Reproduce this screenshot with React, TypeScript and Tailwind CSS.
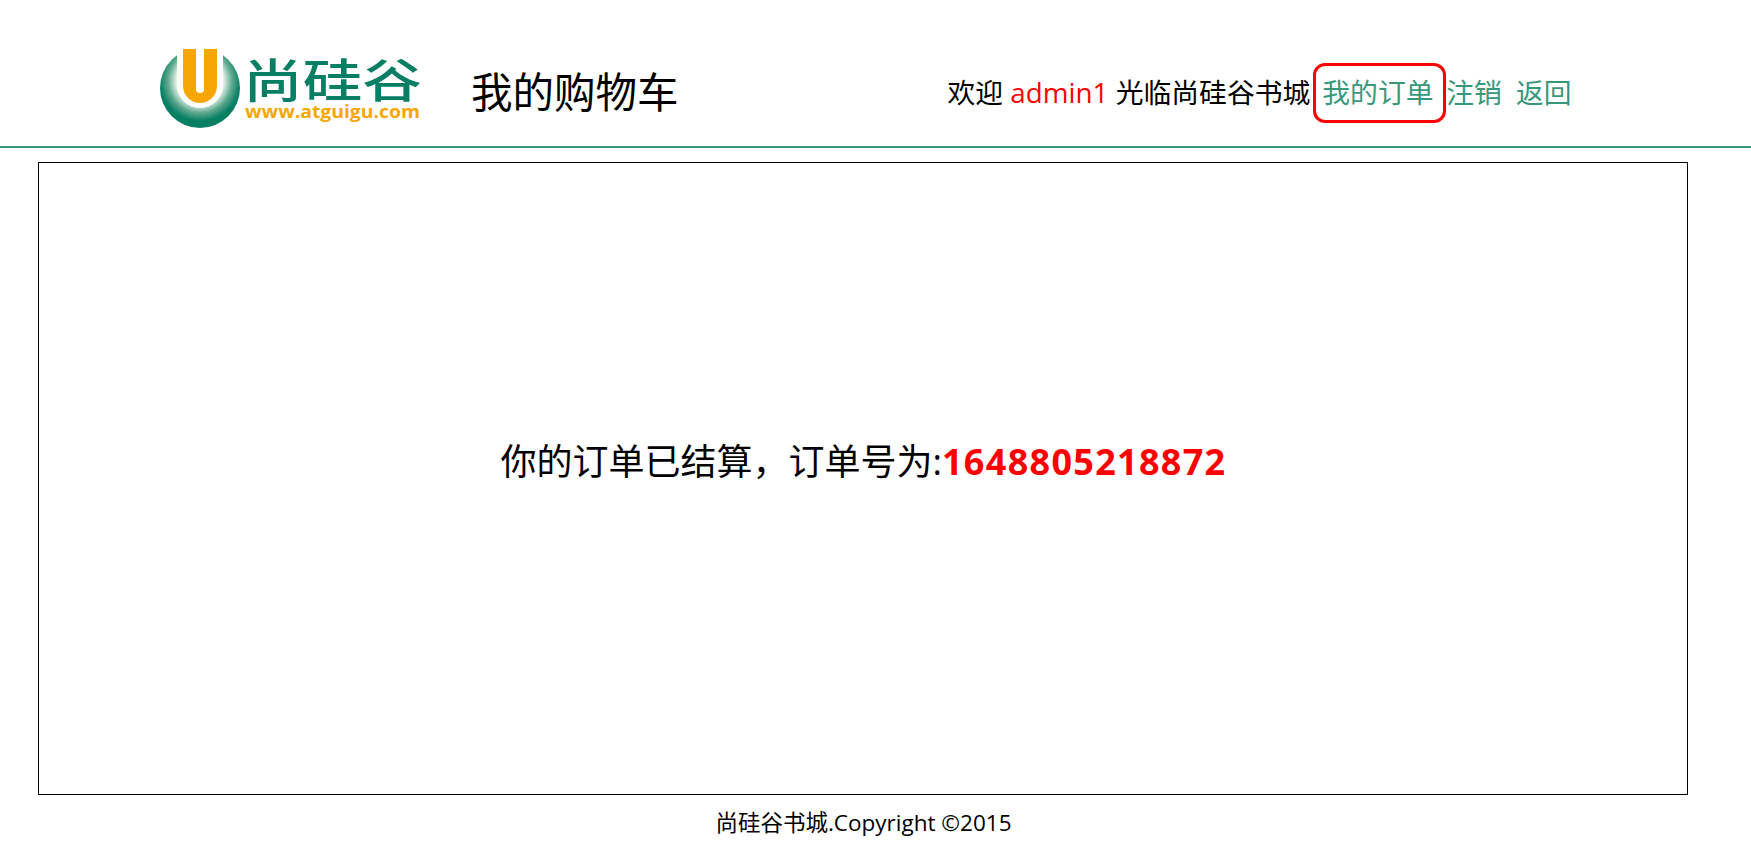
export default function App() {
  return (
    <div className="h-[852px] w-full overflow-hidden bg-white text-black font-['Open_Sans','Noto_Sans_CJK_SC',sans-serif]">
      <header className="flex h-[148px] items-center border-b-2 border-[#39987c] pl-[158px] pt-[44px]">
        <svg width="270" height="90" viewBox="0 0 270 90" className="mb-[10px] shrink-0">
          <defs>
            <radialGradient id="g" gradientUnits="userSpaceOnUse" cx="42" cy="36" r="47">
              <stop offset="0.5" stopColor="#e6f1ec" />
              <stop offset="0.68" stopColor="#5fa98e" />
              <stop offset="0.85" stopColor="#087f64" />
            </radialGradient>
          </defs>
          <circle cx="42" cy="43" r="40" fill="url(#g)" />
          <path d="M19 0 H65 V40 A23 23 0 0 1 19 40 Z" fill="#fff" />
          <path d="M25 4 H59 V41 A17 17 0 0 1 25 41 Z" fill="#f6a704" />
          <path d="M38 4 H46 V44 A4 4 0 0 1 38 44 Z" fill="#fff" />
          <text x="85" y="52" fontSize="46" fontWeight="500" fill="#087f64" textLength="179" lengthAdjust="spacingAndGlyphs" fontFamily="'Noto Sans CJK SC',sans-serif">尚硅谷</text>
          <text x="87" y="73" fontSize="18" fontWeight="700" fill="#f6a704" textLength="175" lengthAdjust="spacingAndGlyphs" fontFamily="'Open Sans',sans-serif">www.atguigu.com</text>
        </svg>
        <span className="mb-[4px] ml-[43px] text-[41.5px] leading-none">我的购物车</span>
        <nav className="mb-[5px] ml-[269px] flex items-center text-[27.8px] leading-none">
          <span className="whitespace-pre">欢迎 </span>
          <span className="whitespace-pre text-[#ff0000]">admin1 </span>
          <span className="mr-[3px]">光临尚硅谷书城</span>
          <a className="flex h-[60px] w-[133px] items-center rounded-[12px] border-[3px] border-[#ff0000] pl-[6px] text-[#39987c]">我的订单</a>
          <a className="text-[#39987c]">注销</a>
          <a className="ml-[14px] text-[#39987c]">返回</a>
        </nav>
      </header>
      <main className="mx-[38px] mt-[14px] flex h-[633px] w-[1650px] items-center justify-center border border-black pb-[33px] text-[36px]">
        <span className="ml-[1px]">你的订单已结算，订单号为:<span className="font-bold tracking-[1.3px] text-[#ff0000]">1648805218872</span></span>
      </main>
      <footer className="mt-[11px] text-center text-[22.5px]">
        <span className="mr-[24px]">尚硅谷书城.Copyright ©2015</span>
      </footer>
    </div>
  );
}
